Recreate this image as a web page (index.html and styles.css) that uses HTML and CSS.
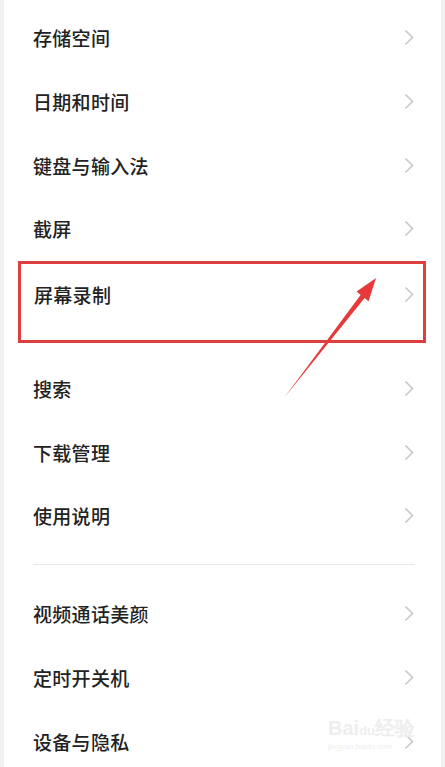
FILE: index.html
```html
<!DOCTYPE html>
<html lang="zh">
<head>
<meta charset="utf-8">
<link rel="stylesheet" href="styles.css">
</head>
<body>
<div class="page">
  <div class="list first">
    <div class="row"><span class="label">存储空间</span><svg class="chev" viewBox="0 0 10 16"><polyline points="1.5,1 8.5,8 1.5,15"/></svg></div>
    <div class="row"><span class="label">日期和时间</span><svg class="chev" viewBox="0 0 10 16"><polyline points="1.5,1 8.5,8 1.5,15"/></svg></div>
    <div class="row"><span class="label">键盘与输入法</span><svg class="chev" viewBox="0 0 10 16"><polyline points="1.5,1 8.5,8 1.5,15"/></svg></div>
    <div class="row"><span class="label">截屏</span><svg class="chev" viewBox="0 0 10 16"><polyline points="1.5,1 8.5,8 1.5,15"/></svg></div>
    <div class="highlight">
      <div class="row inbox"><span class="label">屏幕录制</span><svg class="chev" viewBox="0 0 10 16"><polyline points="1.5,1 8.5,8 1.5,15"/></svg></div>
    </div>
    <div class="row"><span class="label">搜索</span><svg class="chev" viewBox="0 0 10 16"><polyline points="1.5,1 8.5,8 1.5,15"/></svg></div>
    <div class="row"><span class="label">下载管理</span><svg class="chev" viewBox="0 0 10 16"><polyline points="1.5,1 8.5,8 1.5,15"/></svg></div>
    <div class="row"><span class="label">使用说明</span><svg class="chev" viewBox="0 0 10 16"><polyline points="1.5,1 8.5,8 1.5,15"/></svg></div>
  </div>
  <div class="divider"></div>
  <div class="list">
    <div class="row"><span class="label">视频通话美颜</span><svg class="chev" viewBox="0 0 10 16"><polyline points="1.5,1 8.5,8 1.5,15"/></svg></div>
    <div class="row"><span class="label">定时开关机</span><svg class="chev" viewBox="0 0 10 16"><polyline points="1.5,1 8.5,8 1.5,15"/></svg></div>
    <div class="row"><span class="label">设备与隐私</span><svg class="chev" viewBox="0 0 10 16"><polyline points="1.5,1 8.5,8 1.5,15"/></svg></div>
  </div>
  <svg class="arrow" viewBox="0 0 445 767" width="445" height="767">
    <polygon points="284,398 364.6,297.9 368.6,301.2 376,278 356.6,291.6 360.6,294.9"/>
  </svg>
  <div class="watermark">
    <div class="wm-top">Bai<span class="wm-du">du</span>经验</div>
    <div class="wm-url">jingyan.baidu.com</div>
  </div>
</div>
</body>
</html>
```
FILE: styles.css
```css
html, body {
  margin: 0;
  padding: 0;
  background: #ffffff;
}
.page {
  position: relative;
  width: 445px;
  height: 767px;
  overflow: hidden;
  box-sizing: border-box;
  border-left: 4px solid #f1f1f1;
  border-right: 4px solid #f1f1f1;
  background: #ffffff;
  font-family: "Noto Sans CJK SC", "Noto Sans", sans-serif;
}
.list {
  display: flex;
  flex-direction: column;
}
.list.first {
  padding-top: 6px;
}
.row {
  height: 63.7px;
  display: flex;
  align-items: center;
  justify-content: space-between;
  padding: 0 27px 0 29px;
  box-sizing: border-box;
}
.label {
  font-size: 19px;
  font-weight: 500;
  color: #222222;
  letter-spacing: 0.3px;
}
.chev {
  width: 10px;
  height: 17px;
  fill: none;
  stroke: #c6c6c6;
  stroke-width: 1.5;
}
.highlight {
  margin: 0 15px 14px 14px;
  height: 82px;
  box-sizing: border-box;
  border: 3px solid #dd3f3f;
}
.row.inbox {
  height: 62px;
  padding: 0 9px 0 13px;
}
.divider {
  height: 1px;
  background: #e9e9e9;
  margin: 16px 26px 17px 29px;
}
.arrow {
  position: absolute;
  left: -4px;
  top: 0;
  fill: #e8393a;
}
.watermark {
  position: absolute;
  left: 324px;
  top: 718px;
  color: #eeeeee;
  font-family: "Liberation Sans", sans-serif;
}
.wm-top {
  font-size: 20px;
  font-weight: bold;
  line-height: 20px;
}
.wm-du {
  font-size: 13px;
}
.wm-url {
  font-size: 8px;
  line-height: 12px;
}
```
